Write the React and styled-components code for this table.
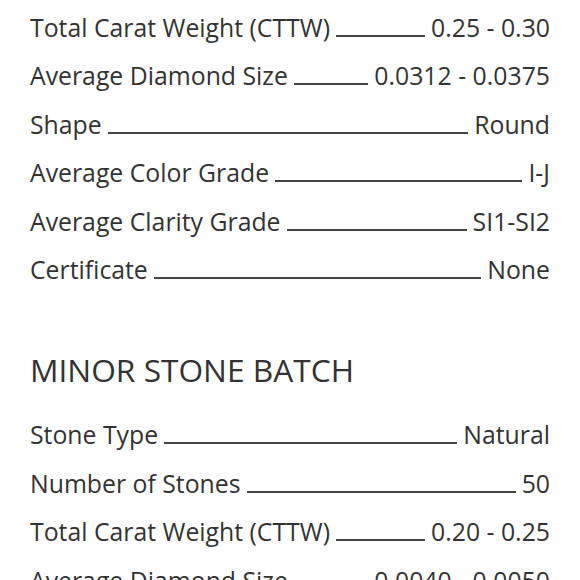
import styled, { createGlobalStyle } from "styled-components";

const Global = createGlobalStyle`
  body {
    margin: 0;
    background: #fff;
    font-family: "Open Sans", "Liberation Sans", sans-serif;
    color: #333;
  }
`;

const Page = styled.div`
  padding: 3px 30px 0;
  height: 580px;
  box-sizing: border-box;
  overflow: hidden;
`;

const Group = styled.div`
  padding-top: ${(p) => p.top || 0}px;
`;

const Heading = styled.h2`
  margin: 0;
  font-weight: 400;
  font-size: 31.7px;
  line-height: 48px;
  color: #333;
`;

const Row = styled.div`
  display: flex;
  align-items: baseline;
  font-size: 24.8px;
  line-height: 48.4px;
`;

const Label = styled.span`
  white-space: nowrap;
`;

const Leader = styled.span`
  flex: 1;
  margin: 0 6px;
  border-bottom: 2px solid #444;
`;

const Value = styled.span`
  white-space: nowrap;
`;

const main = [
  ["Total Carat Weight (CTTW)", "0.25 - 0.30"],
  ["Average Diamond Size", "0.0312 - 0.0375"],
  ["Shape", "Round"],
  ["Average Color Grade", "I-J"],
  ["Average Clarity Grade", "SI1-SI2"],
  ["Certificate", "None"],
];

const minor = [
  ["Stone Type", "Natural"],
  ["Number of Stones", "50"],
  ["Total Carat Weight (CTTW)", "0.20 - 0.25"],
  ["Average Diamond Size", "0.0040 - 0.0050"],
];

function Spec({ label, value }) {
  return (
    <Row>
      <Label>{label}</Label>
      <Leader />
      <Value>{value}</Value>
    </Row>
  );
}

export default function App() {
  return (
    <>
      <Global />
      <Page>
        <Group>
          {main.map(([l, v]) => (
            <Spec key={l} label={l} value={v} />
          ))}
        </Group>
        <Group top={53}>
          <Heading>MINOR STONE BATCH</Heading>
        </Group>
        <Group top={16}>
          {minor.map(([l, v]) => (
            <Spec key={l} label={l} value={v} />
          ))}
        </Group>
      </Page>
    </>
  );
}
